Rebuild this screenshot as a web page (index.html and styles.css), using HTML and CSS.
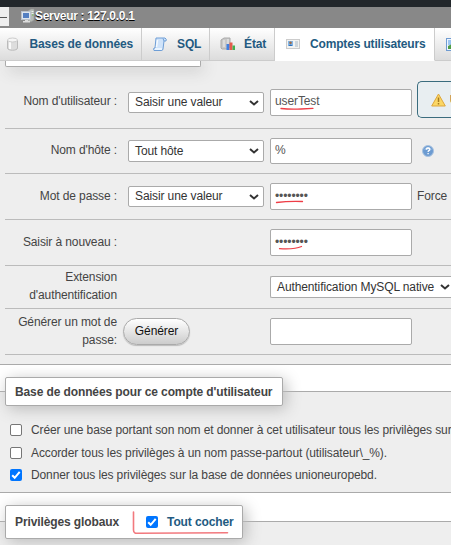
FILE: index.html
```html
<!DOCTYPE html>
<html lang="fr">
<head>
<meta charset="utf-8">
<title>Comptes utilisateurs</title>
<link rel="stylesheet" href="styles.css">
</head>
<body>
<div class="strip"></div>
<header class="server">
  <span class="collapse"></span>
  <svg class="server-icon" width="15" height="16" viewBox="0 0 15 16"><path d="M7 3l3-2h3v11l-3 2-3-1z" fill="#b4b9b4" stroke="#999" stroke-width=".6"/><path d="M10.500 3.500h2M10.500 5.500h2" stroke="#e8eee8"/><path d="M11 7h1.500" stroke="#6fc04e"/><rect x=".5" y="3.500" width="9" height="8" fill="#dce5ee" stroke="#b9c2cc"/><rect x="2" y="5" width="6" height="5" fill="#527fc2"/><path d="M4 12h3v1h2v1.500H2V13h2z" fill="#ddd"/></svg>
  <span>Serveur : 127.0.0.1</span>
</header>
<nav class="tabs">
  <a class="tab tab-db"><svg width="13" height="14" viewBox="0 0 13 14"><path d="M1.500 3v8c0 3 10 3 10 0V3" fill="#ddd" stroke="#bbb"/><path d="M4 4v8" stroke="#fafafa" stroke-width="2"/><ellipse cx="6.500" cy="3" rx="5" ry="2" fill="#f6f6f6" stroke="#ccc"/></svg><span>Bases de données</span></a>
  <a class="tab tab-sql"><svg width="14" height="14" viewBox="0 0 14 14"><path d="M3 1h9q2 1 1 3h-2l-1 8q0 1.500-2 1.500H1q-1-1 0-2.500h1z" fill="#cfe3fa" stroke="#6e9ed6"/><path d="M4.500 3l-1 7M2 12h7" stroke="#f4faff" stroke-width="1.500"/><path d="M10 1.500l1 2.500" stroke="#6e9ed6"/></svg><span>SQL</span></a>
  <a class="tab tab-state"><svg width="16" height="14" viewBox="0 0 16 14"><path d="M1 3l3-2h6v9l-3 2H2l-1-1z" fill="#c9c9c9" stroke="#aaa"/><path d="M4 3v7M8 2v6" stroke="#eee"/><path d="M6.500 7h3v6h-3z" fill="#3f7fe0"/><path d="M9.500 5.500h3V13h-3z" fill="#e45b4c"/><path d="M12.500 8.500H15V13h-2.500z" fill="#42ae50"/></svg><span>État</span></a>
  <a class="tab tab-users active"><svg width="14" height="10" viewBox="0 0 14 10"><rect x=".5" y=".5" width="13" height="9" fill="#f3f3f1" stroke="#ccc"/><path d="M2 2h5v5H2z" fill="#82b5e7"/><circle cx="4.500" cy="3.700" r="1.300" fill="#a06b45"/><path d="M2.500 7q2-3 4 0z" fill="#2b6bb4"/><path d="M9 3h3M9 5h3M9 7h3" stroke="#aab8c5"/></svg><span>Comptes utilisateurs</span></a>
  <a class="tab tab-next"><svg width="14" height="13" viewBox="0 0 14 13"><rect x=".5" y=".5" width="13" height="12" fill="#eef5ff" stroke="#6f9bd1"/><path d="M2 2h10v5H2z" fill="#9cc5f1"/><path d="M2 8l4-2 6 3v2H2z" fill="#4f9d45"/></svg></a>
</nav>

<main>
  <section class="login">
    <div class="legend-cut"></div>
    <div class="row r-user">
      <label>Nom d'utilisateur :</label>
      <div class="select"><span>Saisir une valeur</span><svg width="10" height="6" viewBox="0 0 10 6"><path d="M1 1l4 3.500L9 1"/></svg></div>
      <div class="input">userTest</div>
      <div class="notice"><svg width="15" height="14" viewBox="0 0 15 14"><path d="M7.500 1L14.300 13H.7z" fill="#fbd765" stroke="#dda63c" stroke-linejoin="round"/><path d="M7.500 4.500v4.500M7.500 10v1.500" stroke="#a57a22" stroke-width="1.500"/></svg><b>U</b></div>
    </div>
    <div class="row r-host">
      <label>Nom d'hôte :</label>
      <div class="select"><span>Tout hôte</span><svg width="10" height="6" viewBox="0 0 10 6"><path d="M1 1l4 3.500L9 1"/></svg></div>
      <div class="input">%</div>
      <svg class="help" width="12" height="12" viewBox="0 0 12 12"><circle cx="6" cy="6" r="5.500" fill="#6c9bd1" stroke="#a9c2df"/><path d="M2 4.500q4-5 8 0" fill="#a8c8eb"/><path d="M4.300 4.600q.2-1.600 1.800-1.600 1.700 0 1.700 1.400 0 .9-1 1.300-.7.300-.7 1.200M6.100 8v1.300" fill="none" stroke="#fff" stroke-width="1.300"/></svg>
    </div>
    <div class="row r-pass">
      <label>Mot de passe :</label>
      <div class="select"><span>Saisir une valeur</span><svg width="10" height="6" viewBox="0 0 10 6"><path d="M1 1l4 3.500L9 1"/></svg></div>
      <div class="input dots">••••••••</div>
      <span class="force">Force</span>
    </div>
    <div class="row r-again">
      <label>Saisir à nouveau :</label>
      <div class="input dots">••••••••</div>
    </div>
    <div class="row r-auth">
      <label>Extension<br>d'authentification</label>
      <div class="select wide"><span>Authentification MySQL native</span><svg width="10" height="6" viewBox="0 0 10 6"><path d="M1 1l4 3.500L9 1"/></svg></div>
    </div>
    <div class="row r-gen">
      <label>Générer un mot de<br>passe:</label>
      <button>Générer</button>
      <div class="input"></div>
    </div>
  </section>

  <section class="group">
    <div class="legend"><b>Base de données pour ce compte d'utilisateur</b></div>
    <div class="panel checks">
      <div class="check"><i class="box"></i><span>Créer une base portant son nom et donner à cet utilisateur tous les privilèges sur</span></div>
      <div class="check"><i class="box"></i><span>Accorder tous les privilèges à un nom passe-partout (utilisateur\_%).</span></div>
      <div class="check"><i class="box on"><svg width="12" height="12" viewBox="0 0 12 12"><path d="M2.200 6.200l2.500 2.600 5-6"/></svg></i><span>Donner tous les privilèges sur la base de données unioneuropebd.</span></div>
    </div>
  </section>

  <section class="group global">
    <div class="legend"><b>Privilèges globaux</b><i class="box on"><svg width="12" height="12" viewBox="0 0 12 12"><path d="M2.200 6.200l2.500 2.600 5-6"/></svg></i><b class="all">Tout cocher</b></div>
    <div class="panel"></div>
  </section>
</main>

<svg class="marks" width="451" height="545" viewBox="0 0 451 545">
  <path d="M281 108.500q9 1 20 .5l12-.7M276.500 202.500q12-1.500 26-1M279.500 248.700q15 1 22-2.200"/>
  <path class="soft" d="M133.500 512v18q0 3.500 4 3.200l90-.4"/>
</svg>
</body>
</html>
```
FILE: styles.css
```css
* { box-sizing: border-box; }
html, body { margin: 0; width: 451px; height: 545px; overflow: hidden; }
body { position: relative; background: #fff; color: #444; font: 12px/18px "Liberation Sans", Arial, sans-serif; letter-spacing: -.11px; white-space: nowrap; }
svg { display: block; flex: none; }

.strip { height: 7px; background: #22272b; }
.server { height: 21px; background: #888; display: flex; align-items: flex-start; color: #fff; font-weight: bold; line-height: 18px; letter-spacing: -.31px; text-shadow: 0 1px 0 #000; }
.collapse { width: 9px; height: 19px; background: #eee; padding-top: 10px; margin-right: 12px; }
.collapse::after { content: ""; display: block; width: 7px; height: 1px; background: #555; }
.server-icon { margin-top: 1px; margin-right: -1px; }

.tabs { height: 33px; display: flex; color: #235a81; font-weight: bold; overflow: hidden; }
.tab { flex: none; display: flex; align-items: center; height: 33px; border-right: 1px solid #ccc; border-bottom: 1px solid #ccc; background: linear-gradient(#fff, #dcdcdc); }
.tab-db { width: 142px; padding-left: 6px; gap: 10.5px; }
.tab-sql { width: 68px; padding-left: 11px; gap: 10px; }
.tab-state { width: 65px; padding-left: 10px; gap: 8px; }
.tab-users { width: 160px; padding-left: 11px; gap: 10px; letter-spacing: -.16px; }
.tab-next { width: 16px; padding-left: 11px; border-right: 0; overflow: hidden; }
.tab.active { background: #fff; border-bottom-color: #fff; }

.login { height: 304px; background: #eee; border-bottom: 1px solid #aaa; overflow: hidden; }
.legend-cut { width: 196px; height: 6px; margin-left: 5px; background: #fff; border: 1px solid #aaa; border-top: 0; border-radius: 0 0 2px 2px; box-shadow: 3px 3px 15px #bbb; }
.row { margin-left: 5px; border-bottom: 1px solid #bbb; display: grid; grid-template-columns: 112px 136px 142px 56px; align-items: start; }
.row label { text-align: right; }
.row .select { margin-left: 11px; width: 136px; height: 21px; }
.row .input { grid-column: 3; margin-left: 17px; width: 142px; height: 27px; }
.input, .select { background: #fff; border: 1px solid #aaa; border-radius: 2px; }
.input { padding: 2px 4px; line-height: 19px; color: #555; }
.row .dots { letter-spacing: -.1px; padding-top: 1px; line-height: 23px; }
.select { display: flex; align-items: center; justify-content: space-between; padding: 0 4px 0 6px; color: #333; line-height: 19px; }
.select path { fill: none; stroke: #333; stroke-width: 2; }
.row .select.wide { grid-column: 3 / 5; margin-left: 17px; width: auto; height: 22px; border-right: 0; border-radius: 2px 0 0 2px; padding-right: 1px; }
.r-user { height: 62px; padding-top: 22px; }
.r-user label { margin-top: 3px; }
.r-user .select { margin-top: 3px; }
.notice { height: 37px; margin: -8px 0 0 22px; padding-left: 13px; display: flex; align-items: center; gap: 4px; border: 1px solid #3a6c7e; border-right: 0; border-radius: 5px 0 0 5px; background: #e8eef1; color: #000; overflow: hidden; }
.r-host { height: 45px; padding-top: 9px; }
.r-host label { margin-top: 3px; }
.r-host .select { margin-top: 2px; height: 22px; }
.r-host .input { height: 26px; }
.help { margin: 7px 0 0 27px; }
.r-pass { height: 46px; padding-top: 9px; }
.r-pass label, .force { margin-top: 4px; }
.r-pass .select { margin-top: 3px; }
.force { margin-left: 22px; }
.r-again { height: 46px; padding-top: 9px; }
.r-again label { margin-top: 4px; }
.r-auth { height: 43px; padding-top: 2px; }
.r-auth .select { margin-top: 8px; }
.r-gen { height: 46px; padding-top: 4px; }
.r-gen .input { margin-top: 5px; }
button { margin: 5px 0 0 6px; width: 67px; height: 27px; padding: 0 0 2px; border: 1px solid #aaa; border-radius: 14px; background: linear-gradient(#fff, #ccc); box-shadow: 0 1px 1px #bbb; color: #111; font: inherit; letter-spacing: -.11px; }

.group { padding-top: 12px; display: flex; flex-direction: column; }
.legend { position: relative; z-index: 1; margin-left: 5px; width: 278px; height: 29px; padding-left: 9px; display: flex; align-items: center; background: #fff; border: 1px solid #aaa; border-radius: 2px; box-shadow: 3px 3px 15px #bbb; }
.panel { margin-top: -15px; height: 102px; background: #eee; border: 1px solid #aaa; border-width: 1px 0; overflow: hidden; }
.checks { padding: 27px 0 0 10px; }
.check { height: 22.5px; display: flex; align-items: center; gap: 9px; }
.box { flex: none; width: 12px; height: 12px; border: 1px solid #767676; border-radius: 2px; background: #fff; }
.box.on { background: #0075ff; border: 0; }
.box path { fill: none; stroke: #fff; stroke-width: 2; }
.global .legend { width: 238px; height: 34px; }
.global .panel { margin-top: -18px; height: 24px; border-bottom: 0; }
.global .box { margin-left: 27px; }
.all { margin-left: 9px; color: #235a81; }

.marks { position: absolute; left: 0; top: 0; z-index: 2; fill: none; stroke: #ee3d46; stroke-width: 1.3; stroke-linecap: round; }
.soft { stroke: #f2797e; stroke-width: 1.6; }
```
